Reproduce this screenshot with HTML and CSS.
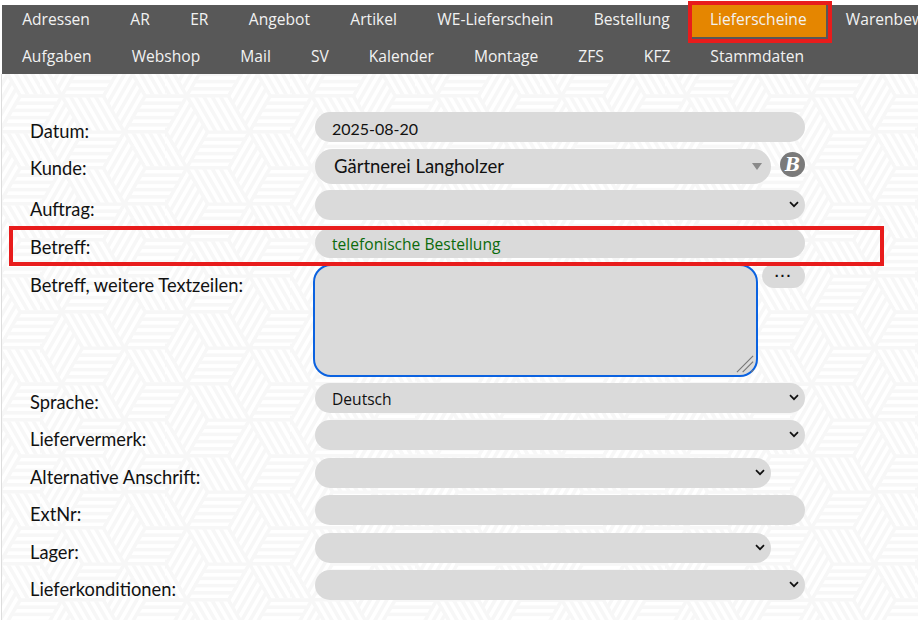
FILE: index.html
```html
<!DOCTYPE html>
<html lang="de">
<head>
    <meta charset="UTF-8">
    <meta name="viewport" content="width=device-width, initial-scale=1.0">
    <title>Lieferscheine</title>
    <link rel="stylesheet" href="styles.css">
</head>
<body>
    <nav class="menu">
        <div class="menu-row menu-row-first">
            <a class="menu-item">Adressen</a>
            <a class="menu-item">AR</a>
            <a class="menu-item">ER</a>
            <a class="menu-item">Angebot</a>
            <a class="menu-item">Artikel</a>
            <a class="menu-item">WE-Lieferschein</a>
            <a class="menu-item">Bestellung</a>
            <a class="menu-item active">Lieferscheine</a>
            <a class="menu-item">Warenbewegung</a>
        </div>
        <div class="menu-row">
            <a class="menu-item">Aufgaben</a>
            <a class="menu-item">Webshop</a>
            <a class="menu-item">Mail</a>
            <a class="menu-item">SV</a>
            <a class="menu-item">Kalender</a>
            <a class="menu-item">Montage</a>
            <a class="menu-item">ZFS</a>
            <a class="menu-item">KFZ</a>
            <a class="menu-item">Stammdaten</a>
        </div>
    </nav>

    <main class="content">
        <form class="delivery-form">
            <label class="field-label">Datum:</label>
            <div class="field field-date"><div class="pill pill-date">2025-08-20</div></div>

            <label class="field-label">Kunde:</label>
            <div class="field field-customer">
                <div class="pill pill-customer">
                    <span>Gärtnerei Langholzer</span>
                    <span class="combo-arrow"></span>
                </div>
                <span class="badge">B</span>
            </div>

            <label class="field-label">Auftrag:</label>
            <div class="field"><div class="pill pill-select"><svg class="chevron" viewBox="0 0 10 7"><path d="M1 1.2 5 5.2l4-4"/></svg></div></div>

            <label class="field-label">Betreff:</label>
            <div class="field field-tight"><div class="pill pill-subject">telefonische Bestellung</div></div>

            <label class="field-label label-tall">Betreff, weitere Textzeilen:</label>
            <div class="field field-text">
                <div class="text-wrap">
                    <textarea class="text-lines"></textarea>
                    <svg class="resize-grip" viewBox="0 0 20 20"><path d="M1 18 18 1M7 18 18 7M16 18l2-2"/></svg>
                </div>
                <button type="button" class="more-btn">...</button>
            </div>

            <label class="field-label">Sprache:</label>
            <div class="field"><div class="pill pill-select">Deutsch<svg class="chevron" viewBox="0 0 10 7"><path d="M1 1.2 5 5.2l4-4"/></svg></div></div>

            <label class="field-label">Liefervermerk:</label>
            <div class="field"><div class="pill pill-select"><svg class="chevron" viewBox="0 0 10 7"><path d="M1 1.2 5 5.2l4-4"/></svg></div></div>

            <label class="field-label">Alternative Anschrift:</label>
            <div class="field"><div class="pill pill-select pill-short"><svg class="chevron" viewBox="0 0 10 7"><path d="M1 1.2 5 5.2l4-4"/></svg></div></div>

            <label class="field-label">ExtNr:</label>
            <div class="field"><div class="pill"></div></div>

            <label class="field-label">Lager:</label>
            <div class="field"><div class="pill pill-select pill-short"><svg class="chevron" viewBox="0 0 10 7"><path d="M1 1.2 5 5.2l4-4"/></svg></div></div>

            <label class="field-label">Lieferkonditionen:</label>
            <div class="field"><div class="pill pill-select"><svg class="chevron" viewBox="0 0 10 7"><path d="M1 1.2 5 5.2l4-4"/></svg></div></div>
        </form>
    </main>

    <div class="mark mark-menu"></div>
    <div class="mark mark-subject"></div>
</body>
</html>
```

FILE: styles.css
```css
html, body {
    margin: 0;
    height: 100%;
    overflow: hidden;
}

body {
    position: relative;
    box-sizing: border-box;
    padding: 5px 0 0 2px;
    background: #fff;
    font-family: "Open Sans", "Noto Sans", sans-serif;
    color: #111;
}

.menu {
    height: 69px;
    background: #585858;
    overflow: hidden;
}

.menu-row {
    display: flex;
    height: 32px;
    margin-bottom: 5px;
    white-space: nowrap;
}

.menu-item {
    flex: none;
    padding: 0 20px;
    line-height: 28px;
    font-size: 15.6px;
    color: #f2f2f2;
}

.menu-row-first .menu-item {
    padding: 0 20.2px;
}

.menu-row-first .menu-item.active {
    padding: 0 19px 0 20px;
    background: #e58600;
}

/* hex tile: three striped rhombi per hexagon */
.content {
    height: 546px;
    border-left: 1px solid #ddd;
    margin-left: -1px;
    background-color: #f7f7f7;
    background-position: 38.5px -14px;
    background-size: 125px 72px;
    background-image: url("data:image/svg+xml,%3Csvg xmlns='http://www.w3.org/2000/svg' xmlns:xlink='http://www.w3.org/1999/xlink' width='125' height='72' viewBox='0 0 125 72'%3E%3Cdefs%3E%3Cpattern id='a' width='7.2' height='7.2' patternUnits='userSpaceOnUse'%3E%3Crect y='1.8' width='7.2' height='3.6' fill='%23fff'/%3E%3C/pattern%3E%3Cpattern id='b' width='7.2' height='7.2' patternUnits='userSpaceOnUse' patternTransform='rotate(-60)'%3E%3Crect y='1.8' width='7.2' height='3.6' fill='%23fff'/%3E%3C/pattern%3E%3Cpattern id='c' width='7.2' height='7.2' patternUnits='userSpaceOnUse' patternTransform='rotate(60)'%3E%3Crect y='1.8' width='7.2' height='3.6' fill='%23fff'/%3E%3C/pattern%3E%3Cg id='h' stroke='%23f7f7f7' stroke-width='3'%3E%3Cpath fill='url(%23a)' d='M0 0H-41.67L-20.83-36H20.83Z'/%3E%3Cpath fill='url(%23b)' d='M0 0 20.83-36 41.67 0 20.83 36Z'/%3E%3Cpath fill='url(%23c)' d='M0 0 20.83 36H-20.83L-41.67 0Z'/%3E%3C/g%3E%3C/defs%3E%3Cuse xlink:href='%23h'/%3E%3Cuse xlink:href='%23h' x='125'/%3E%3Cuse xlink:href='%23h' y='72'/%3E%3Cuse xlink:href='%23h' x='125' y='72'/%3E%3Cuse xlink:href='%23h' x='62.5' y='36'/%3E%3C/svg%3E");
}

.delivery-form {
    display: grid;
    grid-template-columns: 285px 490px;
    padding: 38px 0 0 28px;
}

.field-label {
    padding-top: 7px;
    font-family: Lato, sans-serif;
    font-size: 18.3px;
    line-height: 24px;
}

.label-tall {
    padding-top: 9px;
}

.field {
    min-height: 30px;
    margin-bottom: 7.5px;
}

.field-date {
    margin-bottom: 7px;
}

.field-tight {
    margin-bottom: 6px;
}

.pill {
    position: relative;
    box-sizing: border-box;
    height: 30px;
    padding: 2px 17px 0;
    border-radius: 15px;
    background: #dadada;
    line-height: 29px;
    font-size: 15.6px;
}

.pill-date {
    font-family: Lato, sans-serif;
    font-size: 16px;
}

.pill-short {
    width: 456px;
}

.pill-select .chevron {
    position: absolute;
    right: 6px;
    top: 11px;
    width: 10px;
    height: 7px;
}

.chevron path {
    fill: none;
    stroke: #111;
    stroke-width: 1.7;
}

.field-customer {
    display: flex;
    gap: 9px;
    margin-bottom: 6px;
}

.pill-customer {
    display: flex;
    justify-content: space-between;
    align-items: center;
    width: 456px;
    height: 35px;
    border-radius: 18px;
    padding: 0 9px 0 19px;
    font-family: Lato, sans-serif;
    font-size: 18.5px;
}

.combo-arrow {
    width: 0;
    height: 0;
    border-left: 5px solid transparent;
    border-right: 5px solid transparent;
    border-top: 7px solid #8a8a8a;
}

.badge {
    width: 25px;
    height: 25px;
    margin-top: 3px;
    border-radius: 50%;
    background: #7a7a7a;
    color: #fff;
    text-align: center;
    line-height: 25px;
    font-family: "DejaVu Serif", serif;
    font-size: 18px;
    font-weight: bold;
    font-style: italic;
}

.pill-subject {
    color: #0b6a0b;
}

.field-text {
    display: flex;
    gap: 4px;
    margin-bottom: 6px;
}

.text-wrap {
    position: relative;
    height: 113px;
    margin-left: -2px;
}

.text-lines {
    display: block;
    box-sizing: border-box;
    width: 445px;
    height: 113px;
    margin: 0;
    border: 2px solid #0b62e0;
    border-radius: 18px;
    background: #dadada;
    resize: none;
}

.resize-grip {
    position: absolute;
    right: 3px;
    bottom: 3px;
    width: 19px;
    height: 19px;
}

.resize-grip path {
    fill: none;
    stroke: #777;
    stroke-width: 1.2;
}

.more-btn {
    width: 43px;
    height: 24px;
    padding: 0 0 8px;
    border: none;
    border-radius: 12px;
    background: #dadada;
    color: #111;
    font-size: 14px;
    font-weight: bold;
    line-height: 10px;
    letter-spacing: 2px;
}

.mark {
    position: absolute;
    box-sizing: border-box;
    border: 4px solid #e81c1c;
}

.mark-menu {
    left: 688px;
    top: 1px;
    width: 144px;
    height: 42px;
}

.mark-subject {
    left: 9px;
    top: 226px;
    width: 875px;
    height: 40px;
}
```
